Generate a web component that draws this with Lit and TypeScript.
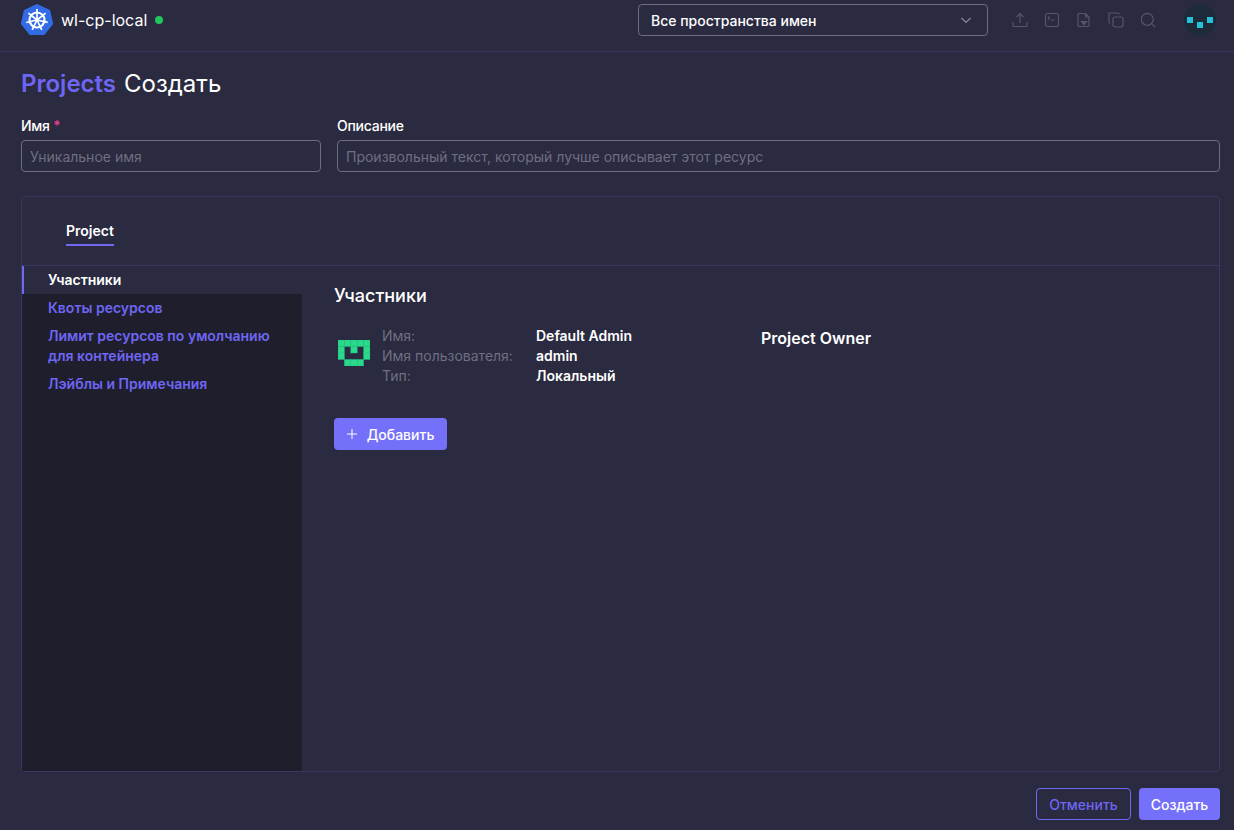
import { LitElement, html, css, svg } from "lit";
import { customElement } from "lit/decorators.js";

const wheelSpokes = [0, 51.4, 102.8, 154.3, 205.7, 257.1, 308.6];
const pixelRows = ["11111", "10101", "10001", "01110"];

@customElement("app-root")
export class AppRoot extends LitElement {
  static styles = css`
    :host { display: block; width: 1234px; height: 830px; background: #2a2a40; color: #fff; font-family: Inter, "Noto Sans", sans-serif; overflow: hidden; }
    .page { display: flex; flex-direction: column; height: 830px; }
    .top { display: flex; align-items: center; height: 40px; padding: 0 21px 11px; border-bottom: 1px solid #3a3860; flex: none; }
    .logo { width: 32px; height: 32px; margin-right: 8px; display: block; }
    .cluster { font-size: 16px; color: #fff; }
    .dot { width: 8px; height: 8px; border-radius: 50%; background: #22c55e; margin-left: 8px; }
    .ns { margin-left: auto; width: 350px; height: 32px; box-sizing: border-box; border: 1px solid #6e6e80; border-radius: 4px; display: flex; align-items: center; justify-content: space-between; padding: 0 15px 0 12px; font-size: 14px; font-weight: 500; }
    .icons { display: flex; align-items: center; gap: 16px; margin-left: 24px; margin-right: 3px; }
    .icons svg { width: 16px; height: 16px; display: block; fill: none; stroke: #565668; stroke-width: 1.2; }
    .avatar { width: 32px; height: 32px; border-radius: 50%; background: #1e2a3a; margin-left: 25px; display: block; margin-right: -3px; flex: none; }
    .main { flex: 1; display: flex; flex-direction: column; padding: 0 14px 10px 21px; min-height: 0; }
    h1 { margin: 16px 0 0; font-size: 24px; line-height: 32px; font-weight: 400; color: #fff; display: flex; gap: 8px; }
    h1 span { color: #6e66f3; font-weight: 600; }
    .fields { display: flex; gap: 16px; margin-top: 16px; }
    .field { display: flex; flex-direction: column; gap: 4px; }
    .field.name { width: 300px; }
    .field.desc { flex: 1; }
    label { font-size: 14px; font-weight: 500; line-height: 20px; letter-spacing: -0.25px; }
    label i { color: #e8408f; font-style: normal; }
    .inp { height: 32px; box-sizing: border-box; border: 1px solid #6e6e80; border-radius: 4px; display: flex; align-items: center; padding: 0 8px; font-size: 14px; color: #6f6f80; }
    .card { margin-top: 24px; flex: 1; border: 1px solid #3a3860; border-radius: 4px; display: flex; flex-direction: column; min-height: 0; }
    .tabs { height: 69px; flex: none; box-sizing: border-box; border-bottom: 1px solid #3a3860; padding: 23px 0 0 44px; }
    .tab { display: inline-block; font-size: 14px; font-weight: 600; line-height: 20px; padding-bottom: 3px; border-bottom: 2px solid #7068f0; }
    .body { flex: 1; display: flex; min-height: 0; }
    nav { width: 280px; background: #1e1e2c; flex: none; font-size: 14px; font-weight: 600; line-height: 20px; color: #6e66f3; }
    nav div { padding: 4px 16px 4px 26px; }
    nav .on { color: #fff; background: #2a2a40; border-left: 2px solid #7068f0; padding-left: 24px; }
    .content { flex: 1; padding: 18px 32px; }
    h2 { margin: 0; font-size: 18px; line-height: 24px; font-weight: 500; }
    .member { display: flex; align-items: flex-start; margin-top: 18px; }
    .pix { width: 32px; height: 26px; margin: 14px 12px 0 4px; display: block; flex: none; }
    .info { display: grid; grid-template-columns: 154px 225px; font-size: 14px; line-height: 20px; }
    .info .k { color: #6f6f80; }
    .info .v { font-weight: 600; }
    .role { font-size: 16px; font-weight: 600; line-height: 24px; margin-top: 0; }
    .btn { height: 32px; box-sizing: border-box; border-radius: 4px; font-size: 14px; font-weight: 500; display: inline-flex; align-items: center; justify-content: center; background: #7570fa; color: #fff; }
    .add { margin-top: 32px; width: 113px; gap: 10px; }
    .add svg { width: 10px; height: 10px; stroke: #fff; stroke-width: 1; fill: none; }
    .foot { display: flex; justify-content: flex-end; gap: 8px; margin-top: 16px; flex: none; }
    .cancel { width: 95px; background: transparent; border: 1px solid #7068f8; color: #6e66f3; }
    .create { width: 81px; }
  `;

  render() {
    return html`<div class="page">
      <header class="top">
        <svg class="logo" viewBox="0 0 32 32">
          <polygon points="16,1.500 27.800,7 30.600,19.500 22.500,29.500 9.500,29.500 1.400,19.500 4.200,7" fill="#326ce5" stroke="#326ce5" stroke-width="3" stroke-linejoin="round"/>
          <g stroke="#fff" fill="none">
            <circle cx="16" cy="16" r="7.500" stroke-width="2.200"/>
            <circle cx="16" cy="16" r="2" fill="#fff" stroke="none"/>
            ${wheelSpokes.map((a) => svg`<line x1="16" y1="16" x2="16" y2="5" stroke-width="1.700" transform="rotate(${a} 16 16)"/>`)}
          </g>
        </svg>
        <span class="cluster">wl-cp-local</span>
        <span class="dot"></span>
        <div class="ns">Все пространства имен
          <svg width="12" height="12" viewBox="0 0 12 12" fill="none" stroke="#8a8a98" stroke-width="1.200"><path d="M1.500 4l4.500 4.500L10.500 4"/></svg>
        </div>
        <div class="icons">
          <svg viewBox="0 0 16 16"><path d="M1 10v3.500a1 1 0 0 0 1 1h12a1 1 0 0 0 1-1V10M8 11V1.500M4.500 5L8 1.500 11.500 5"/></svg>
          <svg viewBox="0 0 16 16"><rect x="1.500" y="1.500" width="13" height="13" rx="2"/><path d="M4 4.500l1.500 1.500L4 7.500M7 8h3.500"/></svg>
          <svg viewBox="0 0 16 16"><path d="M3 1.500h6.500l3.500 3.500v8.500a1 1 0 0 1-1 1H3a1 1 0 0 1-1-1v-11a1 1 0 0 1 1-1zM9.500 1.500V5H13"/><path d="M5.500 9.500h5L8 12.500z" fill="#565668"/></svg>
          <svg viewBox="0 0 16 16"><rect x="5" y="5" width="10" height="10" rx="2"/><path d="M11 2.500V2a1 1 0 0 0-1-1H2a1 1 0 0 0-1 1v8a1 1 0 0 0 1 1h.5"/></svg>
          <svg viewBox="0 0 16 16"><circle cx="7.300" cy="7.300" r="6"/><path d="M11.800 11.800L15 15"/></svg>
        </div>
        <svg class="avatar" viewBox="0 0 32 32">
          <rect x="3" y="13" width="6" height="6" fill="#22c3d8"/><rect x="13" y="18" width="6" height="6" fill="#22c3d8"/><rect x="23" y="13" width="6" height="6" fill="#22c3d8"/>
        </svg>
      </header>
      <main class="main">
        <h1><span>Projects</span>Создать</h1>
        <div class="fields">
          <div class="field name"><label>Имя <i>*</i></label><div class="inp">Уникальное имя</div></div>
          <div class="field desc"><label>Описание</label><div class="inp">Произвольный текст, который лучше описывает этот ресурс</div></div>
        </div>
        <section class="card">
          <div class="tabs"><span class="tab">Project</span></div>
          <div class="body">
            <nav>
              <div class="on">Участники</div>
              <div>Квоты ресурсов</div>
              <div>Лимит ресурсов по умолчанию для контейнера</div>
              <div>Лэйблы и Примечания</div>
            </nav>
            <div class="content">
              <h2>Участники</h2>
              <div class="member">
                <svg class="pix" viewBox="0 0 5 4" preserveAspectRatio="none">
                  ${pixelRows.flatMap((row, y) =>
                    [...row].map((c, x) =>
                      c === "1"
                        ? svg`<rect x=${x} y=${y} width="1" height="1" fill="#2ad98c" stroke="#26c27f" stroke-width="0.06"/>`
                        : svg``
                    )
                  )}
                </svg>
                <div class="info">
                  <span class="k">Имя:</span><span class="v">Default Admin</span>
                  <span class="k">Имя пользователя:</span><span class="v">admin</span>
                  <span class="k">Тип:</span><span class="v">Локальный</span>
                </div>
                <div class="role">Project Owner</div>
              </div>
              <div class="btn add"><svg viewBox="0 0 10 10"><path d="M5 0v10M0 5h10"/></svg>Добавить</div>
            </div>
          </div>
        </section>
        <footer class="foot">
          <div class="btn cancel">Отменить</div>
          <div class="btn create">Создать</div>
        </footer>
      </main>
    </div>`;
  }
}
